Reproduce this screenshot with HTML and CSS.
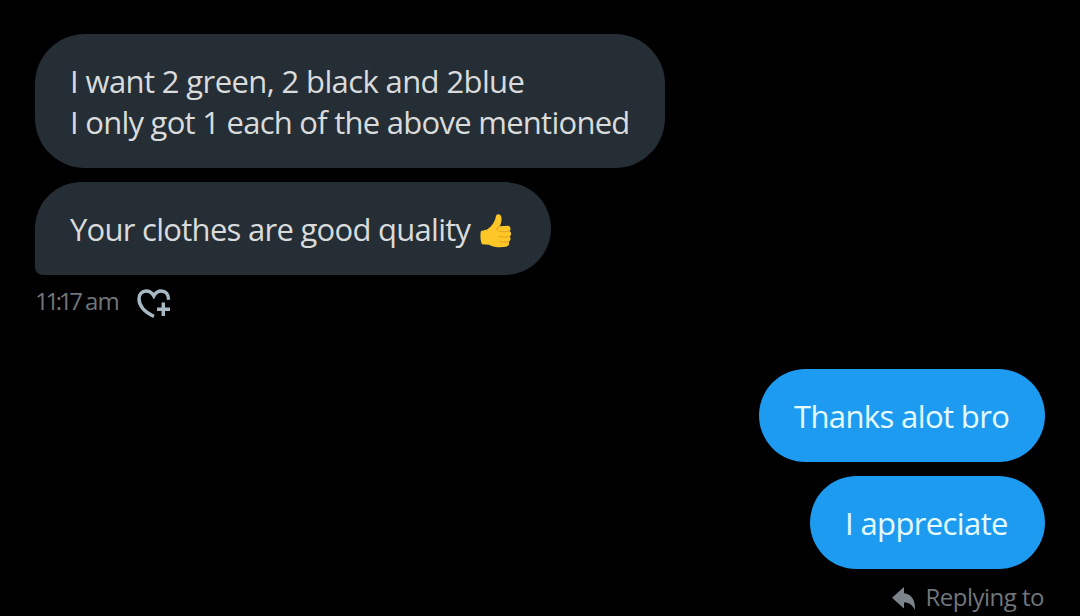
FILE: index.html
```html
<!DOCTYPE html>
<html lang="en">

<head>
    <meta charset="UTF-8">
    <title>Messages</title>
    <link rel="stylesheet" href="styles.css">
</head>

<body>
    <main class="chat">
        <section class="received">
            <div class="bubble first">
                <span class="line want">I want 2 green, 2 black and 2blue</span>
                <span class="line only">I only got 1 each of the above mentioned</span>
            </div>
            <div class="bubble last">
                <span class="line clothes">Your clothes are good quality</span>
                <svg class="thumb" viewBox="0 0 32 34" role="img" aria-label="thumbs up">
                    <path fill="#fdc727" d="M1 17.5L7 16C11 13.5 14.5 9 15.5 4.500C15.800 2 16.800.5 18.500.7C21.500 1 22 4.500 21.300 8C20.900 10 20.300 11.500 20 12.700L27.500 12.300C30.500 12.300 31.500 16 29.500 17.500C31.800 18.800 31.500 22 29.700 23C31.200 24.500 30.600 27.500 28.800 28.200C29.800 30.500 28.500 33 26 33.300C20 34.200 14 33.800 9 31.200L2 30.800C.3 28 0 20.500 1 17.500Z" />
                    <path class="crease" d="M20 12.700C17.500 13.500 16.500 15 17.200 17.200M29.500 17.600C26 18.400 22 18.300 19 17.600M29.700 23C26 24 22 23.700 19.200 22.900M28.800 28.200C26 29 23 28.800 20 28.200" />
                </svg>
            </div>
            <div class="meta">
                <span class="time"><span class="digits">11:17</span> am</span>
                <svg class="heart" viewBox="0 0 34 30">
                    <path d="M17 27.500C8.500 23.500 2 17 2 9.800C2 5.200 5 2 9.200 2C12.500 2 15 3.800 16.800 7C18.500 3.800 21.300 2 24.300 2C28.600 2 31.500 5 31.500 10.700" />
                    <path d="M20 20.300H33M26.300 13.500V27" />
                </svg>
            </div>
        </section>

        <section class="sent">
            <div class="bubble thanks"><span class="line">Thanks alot bro</span></div>
            <div class="bubble appreciate"><span class="line">I appreciate</span></div>
            <div class="reply">
                <svg class="arrow" viewBox="0 0 24 24">
                    <path d="M0 10.800L12 0V6.200C19.500 7 23.500 13 23 23C20.500 18 17.500 15.500 12 15.500V21.500Z" />
                </svg>
                <span class="replying">Replying to</span>
            </div>
        </section>
    </main>
</body>

</html>
```
FILE: styles.css
```css
* {box-sizing: border-box;}

body {
    margin: 0;
    height: 616px;
    overflow: hidden;
    background-color: #000;
    font-family: "Open Sans", "Noto Sans", sans-serif;
}

.chat {padding: 34px 35px 0;}

.received, .sent {
    display: flex;
    flex-direction: column;
    gap: 14px;
}
.received {align-items: flex-start;}
.sent {align-items: flex-end; margin-top: 51px;}

/* message bubbles */
.bubble {
    padding: 27px 35px 25px;
    border-radius: 46.5px;
    font-size: 31px;
    font-weight: 450;
    line-height: 41px;
    letter-spacing: -0.62px;
    white-space: nowrap;
}
.line {display: block;}
.received .bubble {background-color: #252e35; color: #d9dbdc;}
.sent .bubble {background-color: #1d9bf0; color: #e6fbff;}

.first {width: 630px; border-radius: 50px;}
.want {letter-spacing: -0.61px;}
.only {letter-spacing: -0.74px;}
.clothes {width: 400px; letter-spacing: -0.72px;}
.received .last {
    display: flex;
    width: 516px;
    border-radius: 46.5px 46.5px 46.5px 8px;
}
.thanks {width: 286px;}
.appreciate {width: 235px;}

.thumb {width: 32px; height: 35px; margin: 4px 0 0 10px; flex: none;}
.crease {fill: none; stroke: #eba51e; stroke-width: 1.2;}

/* time and reaction */
.meta {
    display: flex;
    height: 29px;
    align-items: center;
}
.time {
    width: 102px;
    padding-bottom: 6px;
    color: #71767b;
    font-size: 24px;
    line-height: 29px;
    letter-spacing: -0.9px;
    white-space: nowrap;
}
.digits {letter-spacing: -3.3px; word-spacing: 0;}
.heart {
    width: 34px;
    height: 30px;
    fill: none;
    stroke: #a9b9c4;
    stroke-width: 3.4;
}

/* reply label */
.reply {
    display: flex;
    align-items: center;
    color: #71767b;
    font-size: 24px;
    line-height: 28px;
    letter-spacing: -0.5px;
    white-space: nowrap;
}
.replying {padding: 0 1px 4px 0;}
.arrow {width: 24px; height: 24px; margin-right: 9px; fill: #7c858c;}
```
